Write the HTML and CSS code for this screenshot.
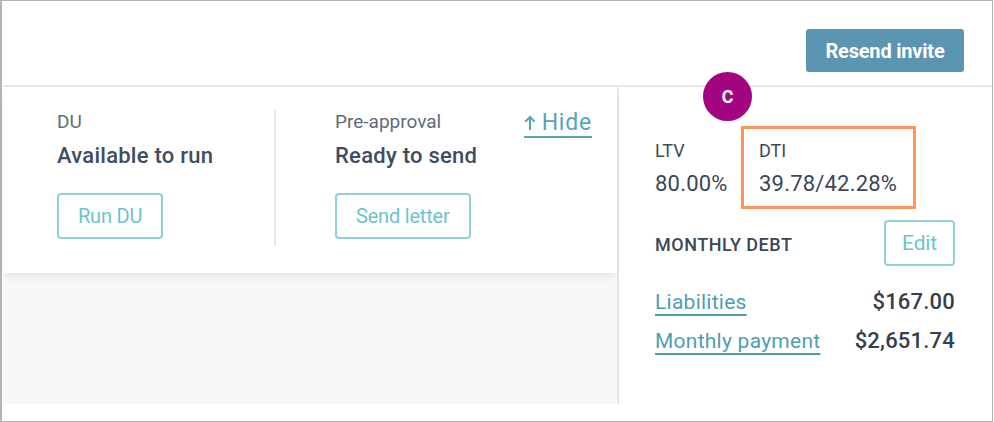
FILE: index.html
```html
<!DOCTYPE html>
<html lang="en">
<head>
<meta charset="utf-8">
<title>Loan summary</title>
<link rel="stylesheet" href="styles.css">
</head>
<body>
<div class="frame">
  <header class="topbar">
    <button class="btn-primary">Resend invite</button>
  </header>
  <div class="main">
    <section class="left">
      <div class="card">
        <div class="col col-du">
          <div class="label">DU</div>
          <div class="status">Available to run</div>
          <button class="btn-outline">Run DU</button>
        </div>
        <div class="col col-pre">
          <div class="label">Pre-approval</div>
          <div class="status">Ready to send</div>
          <button class="btn-outline">Send letter</button>
        </div>
        <a class="hide-link" href="#"><svg class="arrow" width="12" height="16" viewBox="0 0 12 16"><path d="M6 15V2M1.3 6.7L6 2L10.7 6.7" fill="none" stroke="currentColor" stroke-width="2"/></svg><span>Hide</span></a>
      </div>
      <div class="backdrop"></div>
    </section>
    <aside class="right">
      <div class="ratios">
        <div class="ratio ratio-ltv">
          <div class="r-label">LTV</div>
          <div class="r-value">80.00%</div>
        </div>
        <div class="ratio">
          <div class="r-label">DTI</div>
          <div class="r-value">39.78/42.28%</div>
        </div>
      </div>
      <div class="debt-head">
        <span class="debt-title">MONTHLY DEBT</span>
        <button class="btn-outline btn-edit">Edit</button>
      </div>
      <div class="debt-row">
        <a class="debt-link" href="#">Liabilities</a>
        <span class="debt-amt">$167.00</span>
      </div>
      <div class="debt-row">
        <a class="debt-link" href="#">Monthly payment</a>
        <span class="debt-amt">$2,651.74</span>
      </div>
    </aside>
  </div>
  <div class="bottom"></div>
  <div class="badge">c</div>
  <div class="highlight"></div>
</div>
</body>
</html>
```

FILE: styles.css
```css
* { box-sizing: border-box; }
html, body { margin: 0; padding: 0; background: #fff; }
body { font-family: Roboto, "Liberation Sans", sans-serif; }

.frame {
  position: relative;
  width: 993px;
  height: 422px;
  border: 1px solid #adb7b3;
  border-left-width: 2px;
  display: flex;
  flex-direction: column;
  background: #fff;
}

.topbar {
  height: 86px;
  flex: none;
  display: flex;
  justify-content: flex-end;
  align-items: flex-start;
  padding: 28px 28px 0 0;
  margin-left: 1px;
  border-bottom: 2px solid #e6e7e8;
}

.btn-primary {
  width: 158px;
  height: 43px;
  background: #5b95b1;
  color: #fff;
  border: none;
  border-radius: 3px;
  font-family: Roboto, sans-serif;
  font-weight: 700;
  font-size: 20px;
  letter-spacing: -0.2px;
  padding: 0;
}

.main {
  height: 317px;
  flex: none;
  display: flex;
  padding-left: 1px;
}

.left {
  width: 614px;
  display: flex;
  flex-direction: column;
}

.card {
  position: relative;
  z-index: 1;
  height: 186px;
  display: flex;
  align-items: flex-start;
  padding: 23px 25px 27px 54px;
  background: #fff;
  box-shadow: 0 5px 8px -2px rgba(70, 90, 110, 0.14);
}

.col {
  display: flex;
  flex-direction: column;
  align-items: flex-start;
  padding-bottom: 7px;
}

.col-du {
  width: 219px;
  border-right: 2px solid #e5e8eb;
}

.col-pre {
  flex: 1;
  padding-left: 59px;
}

.label {
  font-size: 19px;
  line-height: 24px;
  color: #5d6b7b;
}

.status {
  margin-top: 8px;
  font-size: 22px;
  line-height: 28px;
  font-weight: 500;
  color: #3d4e63;
  letter-spacing: 0.25px;
}

.btn-outline {
  margin-top: 23px;
  height: 46px;
  padding: 0 19px;
  background: #fff;
  border: 2px solid #8fd2d8;
  border-radius: 4px;
  color: #6cc4cc;
  font-family: Roboto, sans-serif;
  font-size: 20px;
  letter-spacing: -0.2px;
}

.hide-link {
  display: flex;
  align-items: center;
  gap: 6px;
  height: 28px;
  color: #57a4b4;
  text-decoration: none;
  font-size: 23px;
  line-height: 24px;
  border-bottom: 2px solid #57a4b4;
  letter-spacing: 0.8px;
}

.arrow { display: block; }

.backdrop {
  flex: 1;
  background: #f8f8f8;
}

.right {
  flex: 1;
  border-left: 2px solid #e4e8ec;
  padding: 53px 37px 0 36px;
  display: flex;
  flex-direction: column;
}

.ratios {
  display: flex;
}

.ratio-ltv { width: 104px; }

.r-label {
  font-size: 18px;
  line-height: 22px;
  color: #3f4a59;
}

.r-value {
  margin-top: 8px;
  font-size: 22px;
  line-height: 28px;
  color: #3b4757;
  letter-spacing: 0.2px;
}

.debt-head {
  margin-top: 22px;
  display: flex;
  justify-content: space-between;
  align-items: center;
}

.debt-title {
  font-size: 18px;
  font-weight: 500;
  color: #3b4757;
  padding-top: 2px;
  letter-spacing: 0.5px;
}

.btn-edit {
  margin-top: 0;
  width: 71px;
  padding: 0;
  font-size: 21px;
}

.debt-row {
  display: flex;
  justify-content: space-between;
  align-items: baseline;
  height: 28px;
  line-height: 28px;
  margin-top: 11px;
}

.debt-head + .debt-row { margin-top: 22px; }

.debt-link {
  font-size: 21px;
  color: #4f9eb0;
  text-decoration: underline;
  text-decoration-thickness: 2px;
  text-underline-offset: 5px;
  letter-spacing: 0.25px;
}

.debt-amt {
  font-size: 22px;
  font-weight: 500;
  color: #343f4e;
  letter-spacing: 0.2px;
}

.bottom { flex: 1; }

.badge {
  position: absolute;
  left: 701px;
  top: 71px;
  width: 49px;
  height: 49px;
  border-radius: 50%;
  background: #a3047f;
  color: #fff;
  font-size: 23px;
  font-weight: 500;
  display: flex;
  align-items: center;
  justify-content: center;
  padding-bottom: 2px;
}

.highlight {
  position: absolute;
  left: 739px;
  top: 125px;
  width: 175px;
  height: 83px;
  border: 3px solid #f8995b;
}
```
